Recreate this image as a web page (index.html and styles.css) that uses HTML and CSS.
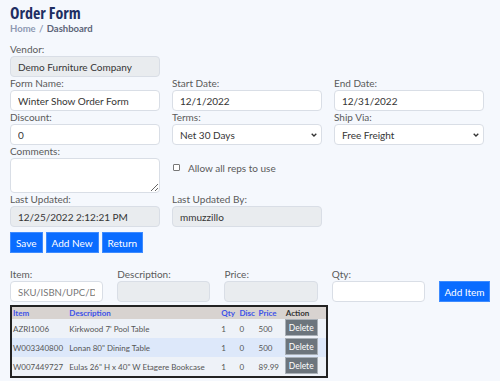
FILE: index.html
```html
<!DOCTYPE html>
<html lang="en">
<head>
    <meta charset="UTF-8">
    <meta name="viewport" content="width=device-width, initial-scale=1.0">
    <title>Order Form</title>
    <link rel="stylesheet" href="styles.css">
</head>
<body>

<div class="page">
    <h1 class="title">Order Form</h1>
    <div class="crumbs"><span class="crumb-home">Home</span> <span class="crumb-sep">/</span> Dashboard</div>

    <div class="form-grid">
        <div class="field">
            <label>Vendor:</label>
            <input class="input" type="text" value="Demo Furniture Company" disabled>
        </div>
        <div></div>
        <div></div>

        <div class="field">
            <label>Form Name:</label>
            <input class="input" type="text" value="Winter Show Order Form">
        </div>
        <div class="field">
            <label>Start Date:</label>
            <input class="input" type="text" value="12/1/2022">
        </div>
        <div class="field">
            <label>End Date:</label>
            <input class="input" type="text" value="12/31/2022">
        </div>

        <div class="field">
            <label>Discount:</label>
            <input class="input" type="text" value="0">
        </div>
        <div class="field">
            <label>Terms:</label>
            <div class="select-wrap">
                <select class="input select">
                    <option>Net 30 Days</option>
                </select>
                <svg class="chevron" width="6" height="4" viewBox="0 0 6 4"><path d="M0.7 0.7 L3 3 L5.3 0.7" fill="none" stroke="#333" stroke-width="1.3"/></svg>
            </div>
        </div>
        <div class="field">
            <label>Ship Via:</label>
            <div class="select-wrap">
                <select class="input select">
                    <option>Free Freight</option>
                </select>
                <svg class="chevron" width="6" height="4" viewBox="0 0 6 4"><path d="M0.7 0.7 L3 3 L5.3 0.7" fill="none" stroke="#333" stroke-width="1.3"/></svg>
            </div>
        </div>

        <div class="field">
            <label>Comments:</label>
            <textarea class="input textarea"></textarea>
        </div>
        <div class="check-row">
            <input class="check" type="checkbox">
            <span>Allow all reps to use</span>
        </div>
        <div></div>

        <div class="field">
            <label>Last Updated:</label>
            <input class="input" type="text" value="12/25/2022 2:12:21 PM" disabled>
        </div>
        <div class="field">
            <label>Last Updated By:</label>
            <input class="input" type="text" value="mmuzzillo" disabled>
        </div>
        <div></div>
    </div>

    <div class="actions">
        <button class="btn">Save</button>
        <button class="btn">Add New</button>
        <button class="btn">Return</button>
    </div>

    <div class="item-row">
        <div class="field">
            <label>Item:</label>
            <input class="input" type="text" placeholder="SKU/ISBN/UPC/Description">
        </div>
        <div class="field">
            <label>Description:</label>
            <input class="input" type="text" disabled>
        </div>
        <div class="field">
            <label>Price:</label>
            <input class="input" type="text" disabled>
        </div>
        <div class="field">
            <label>Qty:</label>
            <input class="input" type="text">
        </div>
        <button class="btn add-item">Add Item</button>
    </div>

    <table class="items">
        <colgroup>
            <col class="c-item">
            <col class="c-desc">
            <col class="c-qty">
            <col class="c-disc">
            <col class="c-price">
            <col class="c-action">
        </colgroup>
        <thead>
            <tr>
                <th>Item</th>
                <th>Description</th>
                <th>Qty</th>
                <th>Disc</th>
                <th>Price</th>
                <th class="action-head">Action</th>
            </tr>
        </thead>
        <tbody>
            <tr>
                <td>AZRI1006</td>
                <td>Kirkwood 7' Pool Table</td>
                <td>1</td>
                <td>0</td>
                <td>500</td>
                <td><button class="delete">Delete</button></td>
            </tr>
            <tr>
                <td>W003340800</td>
                <td>Lonan 80" Dining Table</td>
                <td>1</td>
                <td>0</td>
                <td>500</td>
                <td><button class="delete">Delete</button></td>
            </tr>
            <tr>
                <td>W007449727</td>
                <td>Eulas 26" H x 40" W Etagere Bookcase</td>
                <td>1</td>
                <td>0</td>
                <td>89.99</td>
                <td><button class="delete">Delete</button></td>
            </tr>
        </tbody>
    </table>
</div>

</body>
</html>
```

FILE: styles.css
```css
body {
    margin: 0;
    background-color: #f5f8fd;
    font-family: Lato, "Open Sans", sans-serif;
    color: #5a5a5a;
}

.page {
    padding: 3px 10px 0;
}

.title {
    margin: 0;
    font-family: "Open Sans", sans-serif;
    font-size: 16px;
    line-height: 20px;
    font-weight: 700;
    font-stretch: 75%;
    color: #1f2e62;
}

.crumbs {
    font-size: 9.5px;
    line-height: 11px;
    font-weight: 700;
    color: #5b6478;
    margin-bottom: 9px;
}

.crumb-home {
    color: #8e99b3;
}

.crumb-sep {
    padding: 0 1px;
    color: #8e99b3;
}

.form-grid {
    display: grid;
    grid-template-columns: 150px 150px 150px;
    column-gap: 12px;
}

.field label {
    display: block;
    font-size: 10px;
    line-height: 13px;
}

.input {
    display: block;
    box-sizing: border-box;
    width: 100%;
    height: 21px;
    margin: 0;
    padding: 0 7px;
    border: 1px solid #d9dee6;
    border-radius: 4px;
    background-color: #fff;
    font-family: inherit;
    font-size: 10px;
    color: #353535;
    outline: none;
}

.input:disabled {
    background-color: #e9ecef;
    color: #353535;
}

.input::placeholder {
    color: #777;
    font-size: 9.5px;
}

.select-wrap {
    position: relative;
}

.select {
    appearance: none;
    -webkit-appearance: none;
}

.chevron {
    position: absolute;
    right: 5px;
    top: 9px;
}

.textarea {
    height: 35px;
    resize: vertical;
}

.check-row {
    display: flex;
    align-items: center;
    gap: 8px;
    padding: 16px 0 0 1px;
    font-size: 10px;
    height: 13px;
}

.check {
    appearance: none;
    -webkit-appearance: none;
    width: 7px;
    height: 7px;
    margin: 0;
    border: 1px solid #777;
    border-radius: 1px;
    background-color: #fff;
}

.actions {
    display: flex;
    gap: 3px;
    margin-top: 5px;
}

.btn {
    height: 21px;
    padding: 0 5px;
    border: 1px solid #3d8bff;
    border-radius: 0;
    background-color: #0a6cff;
    color: #fff;
    font-family: inherit;
    font-size: 10px;
}

.item-row {
    display: flex;
    align-items: flex-end;
    gap: 14px;
    margin-top: 15px;
}

.item-row .field {
    width: 95px;
}

.add-item {
    width: 52px;
    padding: 0;
}

.items {
    margin-top: 3px;
    width: 318px;
    border: 2px solid #222;
    border-collapse: collapse;
    table-layout: fixed;
    font-size: 8px;
}

.c-item { width: 57px; }
.c-desc { width: 151px; }
.c-qty { width: 18px; }
.c-disc { width: 19px; }
.c-price { width: 27px; }
.c-action { width: 42px; }

.items th {
    height: 12px;
    padding: 0 1px;
    background-color: #d8d3d0;
    color: #3d52e8;
    font-weight: 700;
    text-align: left;
}

.items th.action-head {
    color: #333;
}

.items td {
    height: 19px;
    padding: 0 1px;
    white-space: nowrap;
    overflow: hidden;
    color: #555;
    background-color: #eef2f8;
}

.items tbody tr:nth-child(2) td {
    background-color: #dde8fa;
}

.items td:last-child {
    vertical-align: top;
    padding: 0;
}

.delete {
    width: 33px;
    height: 17px;
    padding: 0;
    border: 1px solid #a9b0b7;
    border-radius: 0;
    background-color: #6c757d;
    color: #fff;
    font-family: inherit;
    font-size: 8.5px;
}
```
